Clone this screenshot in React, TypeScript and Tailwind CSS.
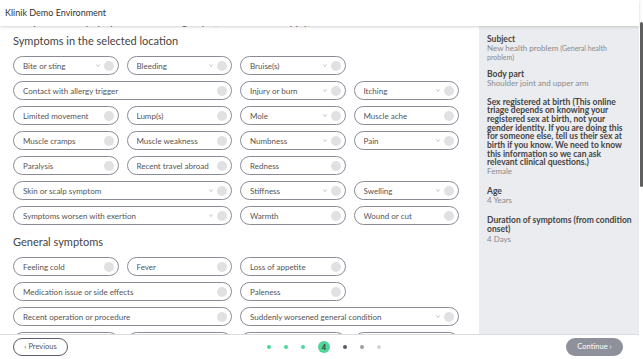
import React from 'react';

type Item = { l: string; d?: boolean; w?: boolean } | null;

const localSymptoms: Item[] = [
  { l: 'Bite or sting', d: true }, { l: 'Bleeding', d: true }, { l: 'Bruise(s)', d: true }, null,
  { l: 'Contact with allergy trigger', w: true }, { l: 'Injury or burn', d: true }, { l: 'Itching', d: true },
  { l: 'Limited movement' }, { l: 'Lump(s)' }, { l: 'Mole', d: true }, { l: 'Muscle ache' },
  { l: 'Muscle cramps' }, { l: 'Muscle weakness' }, { l: 'Numbness', d: true }, { l: 'Pain', d: true },
  { l: 'Paralysis' }, { l: 'Recent travel abroad' }, { l: 'Redness' }, null,
  { l: 'Skin or scalp symptom', d: true, w: true }, { l: 'Stiffness', d: true }, { l: 'Swelling', d: true },
  { l: 'Symptoms worsen with exertion', d: true, w: true }, { l: 'Warmth' }, { l: 'Wound or cut' },
];

const generalSymptoms: Item[] = [
  { l: 'Feeling cold' }, { l: 'Fever' }, { l: 'Loss of appetite' }, null,
  { l: 'Medication issue or side effects', w: true }, { l: 'Paleness' }, null,
  { l: 'Recent operation or procedure', w: true }, { l: 'Suddenly worsened general condition', d: true, w: true },
  { l: '' }, { l: '' }, { l: '' }, { l: '' },
];

const Chip = ({ item }: { item: Item }) => {
  if (!item) return <div />;
  return (
    <div
      className={`${item.w ? 'col-span-2' : ''} flex h-[19px] items-center rounded-full border border-[#8b8b97] pl-[9px] pr-[4px]`}
    >
      <span className="flex-1 truncate text-[8px] leading-[10px] text-[#555]">{item.l}</span>
      {item.d && (
        <svg className="mr-[4px]" width="4" height="3" viewBox="0 0 4 3">
          <path d="M0.4 0.4 L2 2.5 L3.6 0.4" stroke="#aaa" strokeWidth="0.7" fill="none" />
        </svg>
      )}
      <span className="h-[10px] w-[10px] shrink-0 rounded-full bg-[#e1e1e3]" />
    </div>
  );
};

const Grid = ({ items }: { items: Item[] }) => (
  <div className="grid w-[446px] grid-cols-4 gap-x-[8px] gap-y-[6px]">
    {items.map((it, i) => (
      <Chip key={i} item={it} />
    ))}
  </div>
);

export default function App() {
  return (
    <div className="flex h-[359px] w-[643px] overflow-hidden bg-white font-['Lato',sans-serif]">
      <div className="flex w-[639px] flex-col">
        <header className="relative z-10 flex h-[26px] shrink-0 items-center bg-white px-[5px] text-[9px] text-[#333] shadow-[0_1px_3px_rgba(0,0,0,0.18)]">
          Klinik Demo Environment
        </header>

        <div className="flex min-h-0 flex-1">
          <main className="min-w-0 flex-1 overflow-hidden pl-[13px]">
            <p className="-mt-[11px] h-[12px] whitespace-nowrap pl-[4px] text-[10px] leading-[12px] text-[#555]">
              Do you have any symptoms from this group? (Choose all that apply)
            </p>
            <h2 className="mt-[7px] mb-[8px] text-[11px] leading-[14px] text-[#444]">
              Symptoms in the selected location
            </h2>
            <Grid items={localSymptoms} />
            <h2 className="mt-[10px] mb-[8px] text-[11px] leading-[14px] text-[#444]">General symptoms</h2>
            <Grid items={generalSymptoms} />
          </main>

          <aside className="w-[160px] shrink-0 bg-[#ebecef] pl-[8px] pr-[5px] pt-[8.5px]">
            <div className="mb-[8px]">
              <p className="text-[8.5px] font-bold leading-[9px] text-[#444]">Subject</p>
              <p className="text-[8px] leading-[9px] text-[#8a8a8a]">
                New health problem <span className="text-[7px] leading-[9px]">(General health problem)</span>
              </p>
            </div>
            <div className="mb-[10px]">
              <p className="text-[8.5px] font-bold leading-[9px] text-[#444]">Body part</p>
              <p className="text-[8px] leading-[9px] text-[#8a8a8a]">Shoulder joint and upper arm</p>
            </div>
            <div className="mb-[11px]">
              <p className="w-[137px] text-[8.5px] font-bold leading-[8.7px] text-[#444]">
                Sex registered at birth (This online triage depends on knowing your registered sex at birth, not
                your gender identity. If you are doing this for someone else, tell us their sex at birth if you
                know. We need to know this information so we can ask relevant clinical questions.)
              </p>
              <p className="text-[8px] leading-[9px] text-[#8a8a8a]">Female</p>
            </div>
            <div className="mb-[11px]">
              <p className="text-[8.5px] font-bold leading-[9px] text-[#444]">Age</p>
              <p className="text-[8px] leading-[9px] text-[#8a8a8a]">4 Years</p>
            </div>
            <div>
              <p className="text-[8.5px] font-bold leading-[8.7px] text-[#444]">
                Duration of symptoms (from condition onset)
              </p>
              <p className="text-[8px] leading-[10px] text-[#8a8a8a]">4 Days</p>
            </div>
          </aside>
        </div>

        <footer className="flex h-[25px] shrink-0 items-center border-t border-[#dcdcdf] bg-white pl-[13px] pr-[16px]">
          <button className="flex h-[18px] w-[55px] items-center justify-center rounded-full border-[1.5px] border-[#5b5b6d] text-[7.5px] leading-[10px] text-[#555]">
            ‹ Previous
          </button>
          <div className="flex flex-1 items-center justify-center gap-[13px] pl-[14px]">
            <span className="h-[4px] w-[4px] rounded-full bg-[#4fd69c]" />
            <span className="h-[4px] w-[4px] rounded-full bg-[#4fd69c]" />
            <span className="h-[4px] w-[4px] rounded-full bg-[#4fd69c]" />
            <span className="flex h-[12px] w-[12px] items-center justify-center rounded-full bg-[#4fd69c] text-[7px] font-bold leading-[10px] text-[#333]">
              4
            </span>
            <span className="h-[4px] w-[4px] rounded-full bg-[#565a66]" />
            <span className="h-[4px] w-[4px] rounded-full bg-[#9a9ca8]" />
            <span className="h-[4px] w-[4px] rounded-full bg-[#d3d5da]" />
          </div>
          <button className="flex h-[18px] w-[57px] items-center justify-center rounded-full bg-[#8e919b] text-[7.5px] leading-[10px] text-white">
            Continue ›
          </button>
        </footer>
      </div>

      <div className="flex w-[4px] flex-col bg-white">
        <div className="mx-auto mt-[22px] h-[165px] w-[3px] rounded-full bg-[#5f5f5f]" />
      </div>
    </div>
  );
}
